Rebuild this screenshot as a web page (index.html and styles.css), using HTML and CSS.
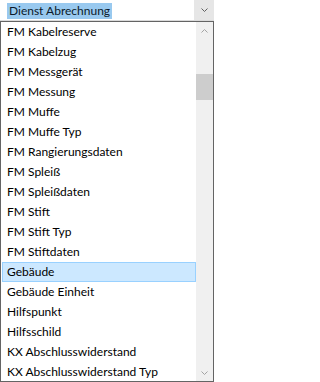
FILE: index.html
```html
<!DOCTYPE html>
<html lang="de">
<head>
<meta charset="utf-8">
<link rel="stylesheet" href="styles.css">
</head>
<body>
<div class="dropdown">
  <div class="combo">
    <div class="field"><span class="selected">Dienst Abrechnung</span></div>
    <div class="combo-btn">
      <svg width="7" height="4" viewBox="0 0 7 4"><path d="M0.5 0.5 L3.5 3.5 L6.5 0.5" fill="none" stroke="#606060" stroke-width="1"/></svg>
    </div>
  </div>
  <div class="list">
    <ul class="items">
      <li>FM Kabelreserve</li>
      <li>FM Kabelzug</li>
      <li>FM Messgerät</li>
      <li>FM Messung</li>
      <li>FM Muffe</li>
      <li>FM Muffe Typ</li>
      <li>FM Rangierungsdaten</li>
      <li>FM Spleiß</li>
      <li>FM Spleißdaten</li>
      <li>FM Stift</li>
      <li>FM Stift Typ</li>
      <li>FM Stiftdaten</li>
      <li class="active">Gebäude</li>
      <li>Gebäude Einheit</li>
      <li>Hilfspunkt</li>
      <li>Hilfsschild</li>
      <li>KX Abschlusswiderstand</li>
      <li>KX Abschlusswiderstand Typ</li>
    </ul>
    <div class="scrollbar">
      <div class="arrow">
        <svg width="7" height="4" viewBox="0 0 7 4"><path d="M0.5 3.5 L3.5 0.5 L6.5 3.5" fill="none" stroke="#a3a3a3" stroke-width="1"/></svg>
      </div>
      <div class="track"><div class="thumb"></div></div>
      <div class="arrow">
        <svg width="7" height="4" viewBox="0 0 7 4"><path d="M0.5 0.5 L3.5 3.5 L6.5 0.5" fill="none" stroke="#a3a3a3" stroke-width="1"/></svg>
      </div>
    </div>
  </div>
</div>
</body>
</html>
```

FILE: styles.css
```css
html, body {
  margin: 0;
  padding: 0;
  background: #ffffff;
}

body {
  font-family: Lato, "Liberation Sans", Arial, sans-serif;
  font-size: 12px;
  color: #000000;
}

.dropdown {
  width: 214px;
  height: 382px;
  display: flex;
  flex-direction: column;
  overflow: hidden;
}

.combo {
  height: 21px;
  box-sizing: border-box;
  display: flex;
  border-bottom: 1px solid #dadada;
  background: #ffffff;
}

.field {
  flex: 1;
  display: flex;
  align-items: flex-start;
  padding-left: 7px;
  padding-top: 3px;
}

.selected {
  display: block;
  height: 16px;
  line-height: 16px;
  padding: 0 2px;
  background: #99c9ef;
  color: #0c1a2a;
  white-space: nowrap;
}

.combo-btn {
  width: 20px;
  background: #e6e6e6;
  display: flex;
  align-items: center;
  justify-content: center;
}

.combo-btn svg,
.arrow svg {
  display: block;
}

.list {
  flex: 1;
  min-height: 0;
  display: flex;
  border: 1px solid #646464;
}

.items {
  flex: 1;
  min-width: 0;
  list-style: none;
  margin: 0;
  padding: 0;
  overflow: hidden;
}

.items li {
  height: 20px;
  box-sizing: border-box;
  line-height: 18px;
  margin-left: 1px;
  padding-left: 4px;
  border: 1px solid transparent;
  white-space: nowrap;
}

.items li.active {
  background: #cce8ff;
  border-color: #99d1ff;
}

.scrollbar {
  width: 17px;
  display: flex;
  flex-direction: column;
  background: #f0f0f0;
}

.arrow {
  height: 17px;
  display: flex;
  align-items: center;
  justify-content: center;
}

.track {
  flex: 1;
}

.thumb {
  margin-top: 35px;
  height: 26px;
  background: #cdcdcd;
}
```
